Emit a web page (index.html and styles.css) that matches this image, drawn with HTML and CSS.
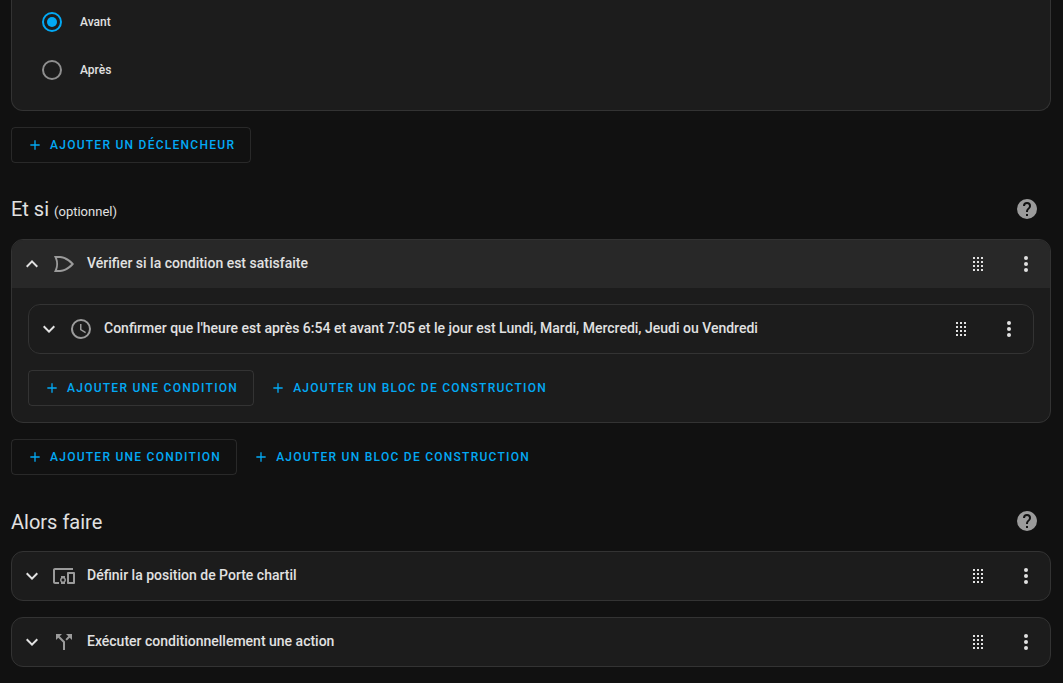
FILE: index.html
```
<!DOCTYPE html>
<html lang="fr">
  <head>
    <meta charset="utf-8" />
    <title>Automatisation</title>
    <link rel="stylesheet" href="styles.css" />
  </head>
  <body>
    <svg class="sprite" aria-hidden="true">
      <symbol id="plus" viewBox="0 0 24 24">
        <path d="M19,13H13V19H11V13H5V11H11V5H13V11H19V13Z" />
      </symbol>
      <symbol id="help" viewBox="0 0 24 24">
        <path
          d="M15.07,11.25L14.17,12.17C13.45,12.89 13,13.5 13,15H11V14.5C11,13.39 11.45,12.39 12.17,11.67L13.41,10.41C13.78,10.05 14,9.55 14,9C14,7.89 13.1,7 12,7A2,2 0 0,0 10,9H8A4,4 0 0,1 12,5A4,4 0 0,1 16,9C16,9.88 15.64,10.67 15.07,11.25M13,19H11V17H13M12,2A10,10 0 0,0 2,12A10,10 0 0,0 12,22A10,10 0 0,0 22,12C22,6.47 17.5,2 12,2Z"
        />
      </symbol>
      <symbol id="chevron-up" viewBox="0 0 24 24">
        <path d="M7.41,15.41L12,10.83L16.59,15.41L18,14L12,8L6,14L7.41,15.41Z" />
      </symbol>
      <symbol id="chevron-down" viewBox="0 0 24 24">
        <path d="M7.41,8.58L12,13.17L16.59,8.58L18,10L12,16L6,10L7.41,8.58Z" />
      </symbol>
      <symbol id="drag" viewBox="0 0 24 24">
        <path
          d="M7,5h2v2h-2zM11,5h2v2h-2zM15,5h2v2h-2zM7,9h2v2h-2zM11,9h2v2h-2zM15,9h2v2h-2zM7,13h2v2h-2zM11,13h2v2h-2zM15,13h2v2h-2zM7,17h2v2h-2zM11,17h2v2h-2zM15,17h2v2h-2z"
        />
      </symbol>
      <symbol id="dots" viewBox="0 0 24 24">
        <circle cx="12" cy="6" r="2" />
        <circle cx="12" cy="12" r="2" />
        <circle cx="12" cy="18" r="2" />
      </symbol>
      <symbol id="gate-or" viewBox="0 0 24 24">
        <path
          d="M2,4C5,10 5,14 2,20H8C13,20 19,16 22,12C19,8 13,4 8,4H2M5,6H8C11.5,6 16.3,9 19.3,12C16.3,15 11.5,18 8,18H5C6.4,13.9 6.4,10.1 5,6Z"
        />
      </symbol>
      <symbol id="clock" viewBox="0 0 24 24">
        <path
          d="M12,20A8,8 0 0,0 20,12A8,8 0 0,0 12,4A8,8 0 0,0 4,12A8,8 0 0,0 12,20M12,2A10,10 0 0,1 22,12A10,10 0 0,1 12,22C6.47,22 2,17.5 2,12A10,10 0 0,1 12,2M12.5,7V12.25L17,14.92L16.25,16.15L11,13V7H12.5Z"
        />
      </symbol>
      <symbol id="devices" viewBox="0 0 24 24">
        <path
          d="M3 6H21V4H3C1.9 4 1 4.9 1 6V18C1 19.1 1.9 20 3 20H7V18H3V6M13 12H9V13.78C8.39 14.33 8 15.11 8 16C8 16.89 8.39 17.67 9 18.22V20H13V18.22C13.61 17.67 14 16.88 14 16S13.61 14.33 13 13.78V12M11 17.5C10.17 17.5 9.5 16.83 9.5 16S10.17 14.5 11 14.5 12.5 15.17 12.5 16 11.83 17.5 11 17.5M22 8H16C15.5 8 15 8.5 15 9V19C15 19.5 15.5 20 16 20H22C22.5 20 23 19.5 23 19V9C23 8.5 22.5 8 22 8M21 18H17V10H21V18Z"
        />
      </symbol>
      <symbol id="call-split" viewBox="0 0 24 24">
        <path
          d="M14,4L16.29,6.29L13.41,9.17L14.83,10.59L17.71,7.71L20,10V4M10,4H4V10L6.29,7.71L11,12.41V20H13V11.59L7.71,6.29"
        />
      </symbol>
    </svg>

    <main>
      <section>
        <div class="card options">
          <label class="option">
            <input type="radio" name="zone" value="before" checked />
            Avant
          </label>
          <label class="option">
            <input type="radio" name="zone" value="after" />
            Après
          </label>
        </div>
        <div class="actions">
          <button class="add outlined" type="button">
            <svg><use href="#plus" /></svg>Ajouter un déclencheur
          </button>
        </div>
      </section>

      <section>
        <div class="heading">
          <h2>Et si <small>(optionnel)</small></h2>
          <button class="icon-button help" type="button" aria-label="Aide">
            <svg><use href="#help" /></svg>
          </button>
        </div>
        <div class="card">
          <div class="row open">
            <button class="toggle" type="button" aria-label="Réduire">
              <svg><use href="#chevron-up" /></svg>
            </button>
            <svg class="type"><use href="#gate-or" /></svg>
            <h3>Vérifier si la condition est satisfaite</h3>
            <button class="icon-button" type="button" aria-label="Déplacer">
              <svg><use href="#drag" /></svg>
            </button>
            <button class="icon-button" type="button" aria-label="Menu">
              <svg><use href="#dots" /></svg>
            </button>
          </div>
          <div class="content">
            <div class="card">
              <div class="row">
                <button class="toggle" type="button" aria-label="Développer">
                  <svg><use href="#chevron-down" /></svg>
                </button>
                <svg class="type"><use href="#clock" /></svg>
                <h3>
                  Confirmer que l'heure est après 6:54 et avant 7:05 et le jour
                  est Lundi, Mardi, Mercredi, Jeudi ou Vendredi
                </h3>
                <button class="icon-button" type="button" aria-label="Déplacer">
                  <svg><use href="#drag" /></svg>
                </button>
                <button class="icon-button" type="button" aria-label="Menu">
                  <svg><use href="#dots" /></svg>
                </button>
              </div>
            </div>
            <div class="actions">
              <button class="add outlined" type="button">
                <svg><use href="#plus" /></svg>Ajouter une condition
              </button>
              <button class="add" type="button">
                <svg><use href="#plus" /></svg>Ajouter un bloc de construction
              </button>
            </div>
          </div>
        </div>
        <div class="actions">
          <button class="add outlined" type="button">
            <svg><use href="#plus" /></svg>Ajouter une condition
          </button>
          <button class="add" type="button">
            <svg><use href="#plus" /></svg>Ajouter un bloc de construction
          </button>
        </div>
      </section>

      <section>
        <div class="heading">
          <h2>Alors faire</h2>
          <button class="icon-button help" type="button" aria-label="Aide">
            <svg><use href="#help" /></svg>
          </button>
        </div>
        <div class="card">
          <div class="row">
            <button class="toggle" type="button" aria-label="Développer">
              <svg><use href="#chevron-down" /></svg>
            </button>
            <svg class="type"><use href="#devices" /></svg>
            <h3>Définir la position de Porte chartil</h3>
            <button class="icon-button" type="button" aria-label="Déplacer">
              <svg><use href="#drag" /></svg>
            </button>
            <button class="icon-button" type="button" aria-label="Menu">
              <svg><use href="#dots" /></svg>
            </button>
          </div>
        </div>
        <div class="card">
          <div class="row">
            <button class="toggle" type="button" aria-label="Développer">
              <svg><use href="#chevron-down" /></svg>
            </button>
            <svg class="type"><use href="#call-split" /></svg>
            <h3>Exécuter conditionnellement une action</h3>
            <button class="icon-button" type="button" aria-label="Déplacer">
              <svg><use href="#drag" /></svg>
            </button>
            <button class="icon-button" type="button" aria-label="Menu">
              <svg><use href="#dots" /></svg>
            </button>
          </div>
        </div>
      </section>
    </main>
  </body>
</html>
```
FILE: styles.css
```
* {
  box-sizing: border-box;
}
body {
  margin: 0;
  background-color: #111111;
  color: #e1e1e1;
  font-family: Roboto, sans-serif;
}
main {
  padding: 0 12px 15px 11px;
}
.sprite {
  display: none;
}
svg {
  display: block;
  flex: none;
  width: 24px;
  height: 24px;
  fill: currentColor;
}
button {
  padding: 0;
  border: none;
  background: none;
  color: inherit;
  font-family: inherit;
  cursor: pointer;
}
.card {
  overflow: hidden;
  border: 1px solid #333333;
  border-radius: 12px;
  background-color: #1c1c1c;
}
.card + .card {
  margin-top: 16px;
}

/* radio list */
.options {
  display: flex;
  flex-direction: column;
  gap: 28px;
  padding: 12px 30px 30px;
  border-top: none;
  border-radius: 0 0 12px 12px;
}
.option {
  display: flex;
  align-items: center;
  gap: 18px;
  font-size: 12px;
  font-weight: 500;
  line-height: 20px;
}
.option input {
  appearance: none;
  width: 20px;
  height: 20px;
  margin: 0;
  border: 2px solid #8e8e8e;
  border-radius: 50%;
}
.option input:checked {
  border-color: #03a9f4;
  padding: 3px;
  background: #03a9f4 content-box;
}

/* section titles */
.heading {
  display: flex;
  align-items: center;
  justify-content: space-between;
  margin: 22px 0 6px;
}
h2 {
  margin: 0;
  padding-top: 2px;
  font-size: 20px;
  font-weight: 400;
  line-height: 28px;
}
h2 small {
  font-size: 13px;
}
.icon-button {
  display: flex;
  flex: none;
  align-items: center;
  justify-content: center;
  width: 48px;
  height: 48px;
}
.help {
  color: #9b9b9b;
}

/* automation rows */
.row {
  display: flex;
  align-items: center;
  padding-left: 8px;
}
.open {
  background-color: #282828;
}
.type {
  margin: 0 11px 0 8px;
  color: #9b9b9b;
}
h3 {
  flex: 1;
  margin: 0;
  padding-bottom: 2px;
  font-size: 14px;
  font-weight: 500;
  line-height: 20px;
}
.content {
  padding: 16px;
}

/* add buttons */
.actions {
  display: flex;
  gap: 8px;
  margin-top: 16px;
}
.add {
  display: flex;
  align-items: center;
  gap: 7px;
  height: 36px;
  padding: 0 8px;
  border-radius: 4px;
  color: #03a9f4;
  font-size: 12px;
  font-weight: 500;
  letter-spacing: 0.105em;
  text-transform: uppercase;
}
.add svg {
  width: 16px;
  height: 16px;
}
.outlined {
  padding: 0 15px;
  border: 1px solid rgba(225, 225, 225, 0.12);
}
```
